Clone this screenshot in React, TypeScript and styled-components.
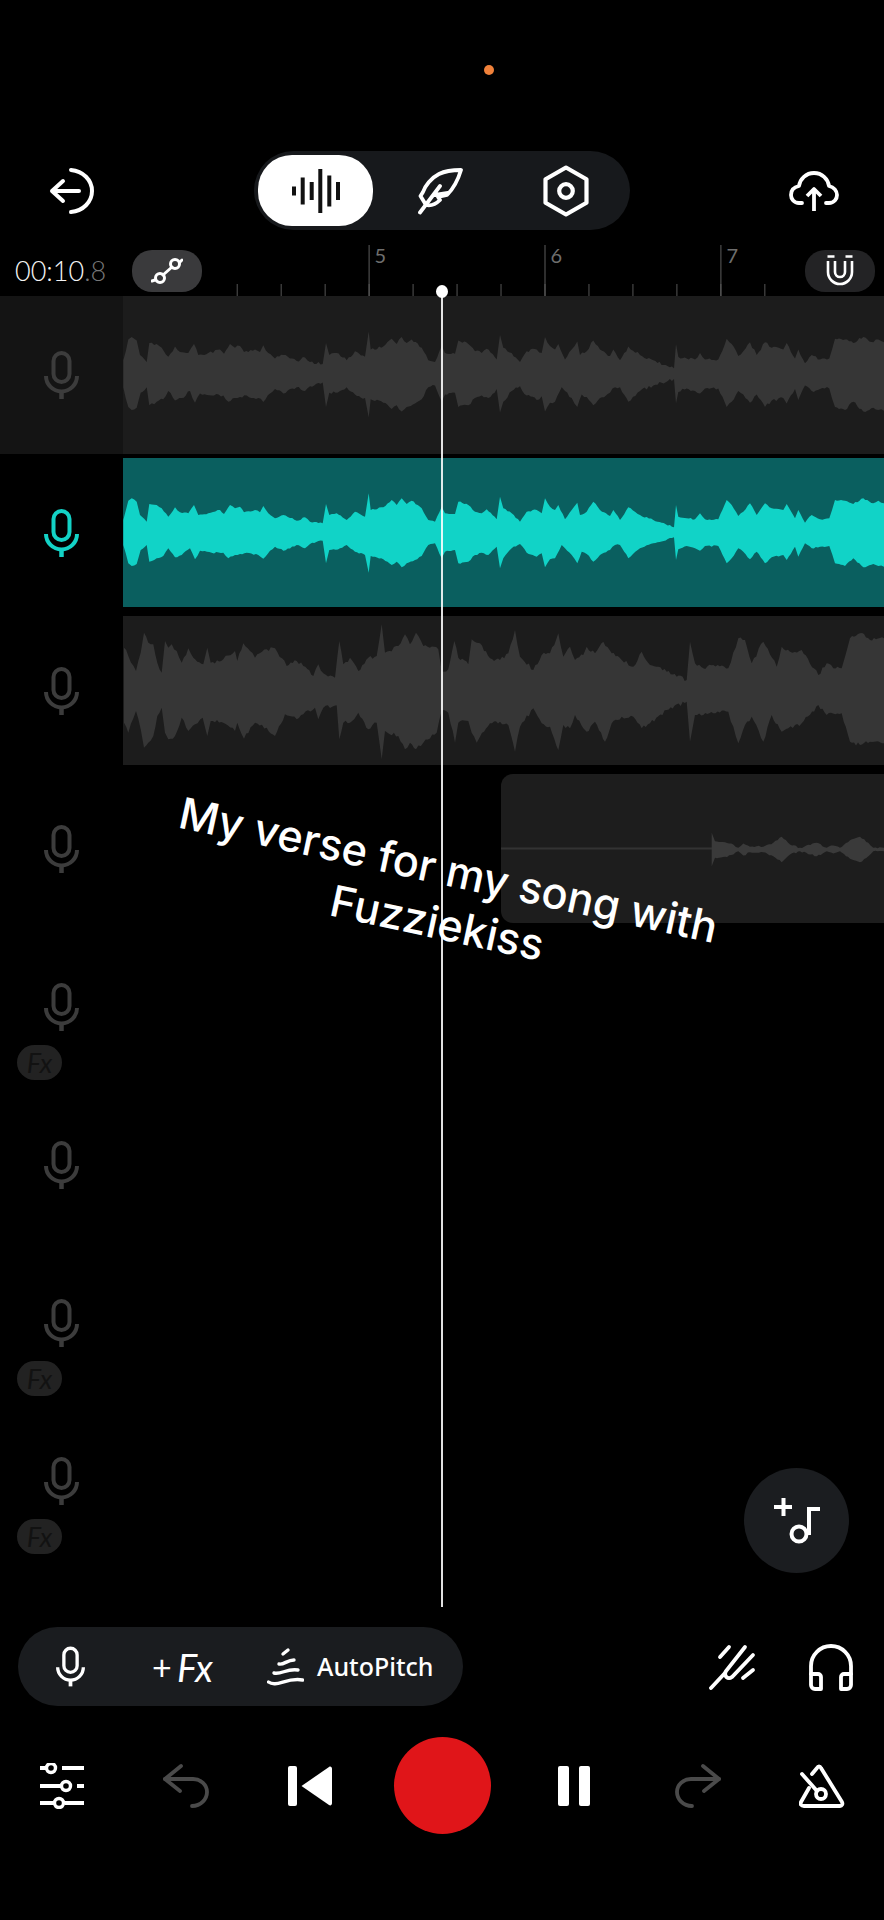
import React from 'react';
import styled, { createGlobalStyle } from 'styled-components';

type Point = [number, number];

const GlobalStyle = createGlobalStyle`
  html, body {
    margin: 0;
    padding: 0;
    background: #000;
  }
  * {
    box-sizing: border-box;
  }
`;

const Page = styled.div`
  position: relative;
  width: 884px;
  height: 1920px;
  overflow: hidden;
  background: #000;
  color: #fff;
  font-family: 'Lato', 'Liberation Sans', sans-serif;
  display: flex;
  flex-direction: column;
`;

const StatusArea = styled.div`
  height: 151px;
  padding: 65px 0 0 484px;
`;

const CameraDot = styled.div`
  width: 10px;
  height: 10px;
  border-radius: 50%;
  background: #f0813a;
`;

const TopBar = styled.div`
  height: 79px;
  padding: 0 45px 0 49px;
  display: grid;
  grid-template-columns: 205px 376px 1fr;
  align-items: center;
`;

const ModeSwitch = styled.div`
  height: 79px;
  padding: 4px;
  border-radius: 40px;
  background: #17191c;
  display: flex;
  align-items: center;
`;

const ModeButton = styled.div<{ $active?: boolean; $width: number }>`
  width: ${({ $width }) => $width}px;
  height: 71px;
  border-radius: 34px;
  display: flex;
  align-items: center;
  justify-content: center;
  background: ${({ $active }) => ($active ? '#fff' : 'transparent')};
`;

const TopIcon = styled.div<{ $end?: boolean }>`
  display: flex;
  justify-content: ${({ $end }) => ($end ? 'flex-end' : 'flex-start')};
`;

const Timeline = styled.div`
  position: relative;
  margin-top: 15px;
  height: 1382px;
`;

const RulerRow = styled.div`
  height: 51px;
  padding: 0 9px 0 15px;
  display: flex;
  align-items: center;
`;

const Timer = styled.div`
  width: 117px;
  font-size: 27px;
  font-weight: 300;
  color: #f4f4f4;
  span {
    color: #777;
  }
`;

const RulerButton = styled.div<{ $bg: string }>`
  width: 70px;
  height: 42px;
  flex: none;
  border-radius: 20px;
  background: ${({ $bg }) => $bg};
  display: flex;
  align-items: center;
  justify-content: center;
`;

const RulerScale = styled.svg`
  flex: 1;
  height: 55px;
  margin-top: -4px;
  align-self: flex-start;
  display: block;
`;

const Tracks = styled.div`
  display: flex;
  flex-direction: column;
`;

const TrackRow = styled.div<{ $tint?: boolean }>`
  position: relative;
  height: 158px;
  display: flex;
  background: ${({ $tint }) => ($tint ? '#141414' : 'transparent')};
`;

const MicCell = styled.div`
  width: 123px;
  flex: none;
  display: flex;
  align-items: center;
  justify-content: center;
`;

const Clip = styled.div<{ $bg: string; $full?: boolean; $inset?: number }>`
  flex: 1;
  margin: ${({ $full }) => ($full ? '0' : '4px 0 5px')};
  margin-left: ${({ $inset }) => $inset || 0}px;
  border-radius: ${({ $inset }) => ($inset ? '12px 0 0 12px' : '0')};
  background: ${({ $bg }) => $bg};
  overflow: hidden;
`;

const WaveSvg = styled.svg`
  width: 100%;
  height: 100%;
  display: block;
`;

const FxBadge = styled.div`
  position: absolute;
  left: 17px;
  top: 117px;
  width: 45px;
  height: 35px;
  border-radius: 18px;
  background: #222;
  color: #121212;
  font-size: 27px;
  font-style: italic;
  line-height: 35px;
  text-align: center;
`;

const Playhead = styled.div`
  position: absolute;
  left: 441px;
  top: 46px;
  bottom: 20px;
  width: 2px;
  background: rgba(255, 255, 255, 0.88);
  &::before {
    content: '';
    position: absolute;
    left: -5px;
    top: -6px;
    width: 12px;
    height: 13px;
    border-radius: 50%;
    background: #fff;
  }
`;

const AddTrackButton = styled.div`
  position: absolute;
  right: 35px;
  bottom: 54px;
  width: 105px;
  height: 105px;
  border-radius: 50%;
  background: #1b1d20;
  display: flex;
  align-items: center;
  justify-content: center;
`;

const Caption = styled.div`
  position: absolute;
  left: 443px;
  top: 896px;
  width: 640px;
  transform: translate(-50%, -50%) rotate(12.2deg);
  font-family: 'Inter', 'Liberation Sans', sans-serif;
  font-size: 43.4px;
  font-weight: 500;
  line-height: 54px;
  text-align: center;
  color: #fff;
`;

const ToolRow = styled.div`
  height: 79px;
  padding: 0 30px 0 18px;
  display: flex;
  align-items: center;
  justify-content: space-between;
`;

const ToolPill = styled.div`
  width: 445px;
  height: 79px;
  padding-left: 38px;
  border-radius: 40px;
  background: #1a1c1f;
  display: flex;
  align-items: center;
`;

const FxLabel = styled.div`
  margin: 0 54px 0 67px;
  width: 61px;
  display: flex;
  align-items: center;
  justify-content: space-between;
  font-size: 38px;
  font-style: italic;
  white-space: nowrap;
  line-height: 1;
  span {
    font-style: normal;
    font-size: 34px;
  }
`;

const PitchLabel = styled.div`
  margin-left: 13px;
  font-family: 'Noto Sans', 'Liberation Sans', sans-serif;
  font-size: 25px;
  font-weight: 500;
  white-space: nowrap;
  position: relative;
  top: -1px;
`;

const ToolGroup = styled.div`
  display: flex;
  align-items: center;
  gap: 52px;
`;

const Transport = styled.div`
  margin-top: 31px;
  height: 97px;
  display: grid;
  grid-template-columns: repeat(3, 124px) 140px repeat(3, 124px);
  align-items: center;
  justify-items: center;
`;

const RecordButton = styled.div`
  width: 97px;
  height: 97px;
  border-radius: 50%;
  background: #e01519;
`;

const PauseIcon = styled.div`
  display: flex;
  gap: 10px;
  i {
    display: block;
    width: 11px;
    height: 40px;
    border-radius: 2px;
    background: #fff;
  }
`;

// waveform outlines traced off the reference, in 3x crop coordinates
const fromCrop = (ox: number, oy: number, pts: Point[]): Point[] =>
  pts.map(([x, y]) => [ox + x / 3, oy + y / 3]);

const tealTop: Point[] = [
  ...fromCrop(120, 480, [[10,120],[25,62],[35,55],[50,65],[60,105],[80,125],[88,72],[110,75],[125,85],[145,110],[165,82],[180,97],[205,100],[222,75],[235,105],[265,100],[300,90],[312,102],[330,75],[345,85],[360,80],[372,97],[405,90],[420,97],[430,78],[445,100],[465,115],[490,105],[530,122],[555,112],[570,125],[608,130],[618,72],[628,105],[650,100],[680,120],[705,95],[735,110],[746,40],[752,90],[790,82],[815,60],[830,75],[845,55],[860,72],[875,62],[905,85],[925,120],[945,125],[965,80],[975,100],[1005,102],[1015,65],[1045,75],[1065,95],[1085,100],[1100,88],[1130,118]]),
  ...fromCrop(500, 480, [[0,50],[10,85],[35,100],[60,125],[80,95],[110,90],[125,100],[135,55],[150,80],[165,90],[175,75],[195,118],[215,90],[232,68],[240,105],[260,95],[280,65],[300,90],[330,108],[340,90],[360,120],[385,82],[420,105],[460,120],[522,142],[528,75],[535,110],[560,115],[585,118],[600,100],[615,118],[655,118],[680,60],[695,75],[715,108],[730,95],[750,70],[770,105],[795,70],[815,85],[850,90],[860,72],[885,115],[895,90],[915,128],[935,105],[960,118],[988,115],[1005,60],[1035,62],[1060,72],[1090,55],[1120,70],[1135,62],[1152,70]]),
];

const tealBottom: Point[] = [
  ...fromCrop(120, 480, [[10,195],[25,250],[35,258],[50,252],[62,210],[80,195],[88,245],[110,235],[130,228],[145,205],[165,232],[185,225],[210,205],[225,238],[240,212],[275,218],[310,218],[325,235],[345,225],[360,222],[380,218],[415,225],[430,236],[450,212],[465,200],[490,212],[530,195],[555,205],[570,192],[608,182],[618,250],[628,210],[660,205],[680,195],[705,215],[735,225],[746,278],[752,228],[790,238],[815,255],[830,245],[845,262],[860,250],[885,240],[905,228],[925,195],[945,190],[965,235],[975,215],[1005,210],[1015,250],[1045,245],[1065,225],[1085,218],[1105,225],[1130,200]]),
  ...fromCrop(500, 480, [[0,265],[10,235],[35,205],[60,192],[80,218],[110,230],[125,220],[135,262],[150,238],[165,235],[185,195],[195,205],[215,225],[232,250],[245,215],[260,222],[280,245],[300,225],[330,210],[345,195],[360,195],[385,235],[420,205],[460,190],[522,172],[528,240],[535,208],[560,198],[585,205],[600,212],[615,198],[655,198],[680,250],[695,235],[715,205],[730,215],[750,238],[770,215],[795,250],[815,232],[850,225],[860,240],[885,200],[895,230],[915,190],[935,205],[960,200],[988,198],[1005,250],[1035,258],[1060,235],[1090,262],[1120,252],[1135,258],[1152,260]]),
];

const grayTop: Point[] = [
  ...fromCrop(120, 616, [[12,95],[25,120],[48,165],[62,110],[72,50],[85,80],[100,85],[112,140],[125,170],[135,75],[145,95],[155,85],[170,105],[185,140],[205,97],[220,125],[250,145],[262,95],[272,140],[310,130],[345,105],[352,135],[370,82],[390,105],[405,125],[440,100],[465,97],[500,150],[530,135],[550,150],[580,180],[595,145],[610,172],[645,185],[658,75],[670,145],[690,125],[715,165],[745,125],[770,120],[785,25],[795,110],[835,90],[855,55],[870,85],[888,50],[910,90],[955,100],[965,165],[985,160],[1003,75],[1015,125],[1045,145],[1055,70],[1070,80]]),
  ...fromCrop(480, 600, [[0,130],[30,175],[60,180],[85,160],[105,90],[120,170],[160,210],[185,165],[210,160],[235,100],[250,170],[270,140],[285,180],[310,165],[320,140],[345,160],[370,125],[395,160],[425,180],[460,200],[485,155],[510,195],[560,215],[620,240],[630,125],[645,190],[670,205],[700,195],[745,205],[775,115],[795,120],[815,190],[850,125],[890,200],[905,140],[930,155],[965,150],[1015,225],[1040,190],[1060,205],[1085,205],[1110,115],[1140,100],[1170,120],[1212,115]]),
];

const grayBottom: Point[] = [
  ...fromCrop(120, 616, [[12,320],[25,350],[48,285],[62,340],[72,395],[85,380],[100,360],[112,300],[125,275],[135,350],[145,370],[165,360],[185,305],[205,345],[225,325],[248,305],[262,360],[272,315],[310,320],[345,345],[352,320],[372,368],[405,320],[440,335],[465,360],[495,295],[530,310],[550,295],[585,275],[595,310],[610,275],[650,268],[658,370],[670,320],[690,320],[715,290],[745,340],[770,320],[785,430],[795,345],[835,360],[855,400],[870,380],[888,400],[910,380],[950,350],[965,285],[985,290],[1005,380],[1015,320],[1045,315],[1055,350],[1070,380]]),
  ...fromCrop(480, 600, [[0,410],[30,370],[60,365],[85,375],[105,455],[120,380],[160,325],[185,370],[210,380],[235,450],[250,375],[270,385],[285,345],[310,385],[320,395],[345,365],[375,425],[395,370],[425,350],[460,350],[485,385],[510,370],[560,330],[620,305],[630,425],[645,345],[670,345],[700,340],[745,335],[775,430],[795,375],[815,350],[850,425],[875,345],[905,395],[925,385],[965,370],[1015,315],[1040,345],[1085,340],[1110,425],[1140,435],[1170,425],[1212,430]]),
];

const lastTop: Point[] = fromCrop(480, 600, [[695,700],[705,725],[735,728],[760,735],[775,745],[790,732],[810,742],[830,740],[850,742],[880,730],[905,712],[930,735],[960,745],[1010,730],[1040,745],[1060,738],[1080,745],[1110,722],[1140,712],[1165,730],[1180,745],[1212,745]]);
const lastBottom: Point[] = lastTop.map(([x, y]) => [x, 849 * 2 - y + 2]);

// the traced outline is coarse, this adds the fine serration of real audio
const roughen = (pts: Point[], amount: number, seed: number): Point[] => {
  const out: Point[] = [];
  pts.forEach(([x, y], i) => {
    out.push([x, y]);
    const next = pts[i + 1];
    if (!next) return;
    const steps = Math.floor((next[0] - x) / 2);
    for (let s = 1; s < steps; s++) {
      const t = s / steps;
      const px = x + (next[0] - x) * t;
      const raw = Math.sin((px + seed) * 12.9898) * 43758.5453;
      const noise = raw - Math.floor(raw) - 0.5;
      out.push([px, y + (next[1] - y) * t + noise * amount]);
    }
  });
  return out;
};

const toPath = (top: Point[], bottom: Point[]) =>
  'M' + [...top, ...[...bottom].reverse()].map(([x, y]) => `${x.toFixed(1)} ${y.toFixed(1)}`).join('L') + 'Z';

const rescale = (pts: Point[], from: number, to: number, k: number): Point[] =>
  pts.map(([x, y]) => [x, to + (y - from) * k]);

const tracks = [
  { mic: '#3c3c3c', tint: true, fx: false },
  { mic: '#13d2c6', tint: false, fx: false },
  { mic: '#3c3c3c', tint: false, fx: false },
  { mic: '#3c3c3c', tint: false, fx: false },
  { mic: '#3c3c3c', tint: false, fx: true },
  { mic: '#3c3c3c', tint: false, fx: false },
  { mic: '#3c3c3c', tint: false, fx: true },
  { mic: '#3c3c3c', tint: false, fx: true },
];

const Wave: React.FC<{ x: number; y: number; w: number; h: number; d: string; fill: string; children?: React.ReactNode }> = ({ x, y, w, h, d, fill, children }) => (
  <WaveSvg viewBox={`${x} ${y} ${w} ${h}`} preserveAspectRatio="none">
    {children}
    <path d={d} fill={fill} />
  </WaveSvg>
);

const clipFor = (index: number) => {
  if (index === 0) {
    return (
      <Clip $bg="#1c1c1c" $full>
        <Wave x={123} y={296} w={761} h={158} fill="#363636"
          d={toPath(
            roughen(rescale(tealTop, 532.7, 374, 1.08), 3, 3),
            roughen(rescale(tealBottom, 532.7, 374, 1.08), 3, 7),
          )} />
      </Clip>
    );
  }
  if (index === 1) {
    return (
      <Clip $bg="#0a5f5f">
        <Wave x={123} y={458} w={761} h={149} fill="#11d3c7" d={toPath(roughen(tealTop, 1.5, 1), roughen(tealBottom, 1.5, 2))} />
      </Clip>
    );
  }
  if (index === 2) {
    return (
      <Clip $bg="#1c1c1c">
        <Wave x={123} y={616} w={761} h={149} fill="#363636" d={toPath(roughen(grayTop, 4, 5), roughen(grayBottom, 4, 9))} />
      </Clip>
    );
  }
  if (index === 3) {
    return (
      <Clip $bg="#1d1d1d" $inset={378}>
        <Wave x={501} y={775} w={383} h={148} fill="#3a3a3a" d={toPath(roughen(lastTop, 1.5, 4), roughen(lastBottom, 1.5, 6))}>
          <rect x={501} y={848} width={215} height={2} fill="#333" />
        </Wave>
      </Clip>
    );
  }
  return null;
};

const MicIcon: React.FC<{ color: string; w?: number; h?: number }> = ({ color, w = 35, h = 48 }) => (
  <svg width={w} height={h} viewBox="0 0 35 48" fill="none" stroke={color} strokeWidth="4">
    <rect x="9.500" y="2" width="16" height="29" rx="8" />
    <path d="M2 25a15.500 15.500 0 0 0 31 0" />
    <path d="M17.500 40v8" strokeWidth="4.500" />
  </svg>
);

const BackIcon = () => (
  <svg width="46" height="48" viewBox="0 0 46 48" fill="none" stroke="#fff" strokeWidth="4" strokeLinecap="round" strokeLinejoin="round">
    <path d="M30 24H3M14 14 3 24l11 10" />
    <path d="M22 3c12 1 21 10 21 21s-9 20-21 21" />
  </svg>
);

const WaveBarsIcon = () => (
  <svg width="48" height="44" viewBox="0 0 48 44" fill="#111">
    <rect x="0" y="17.500" width="4" height="9" />
    <rect x="8.700" y="8.500" width="4" height="27" />
    <rect x="17.700" y="13" width="4" height="18" />
    <rect x="26.300" y="0" width="4" height="44" />
    <rect x="35.300" y="6.500" width="4" height="31" />
    <rect x="44" y="13" width="4" height="18" />
  </svg>
);

const FeatherIcon = () => (
  <svg width="45" height="48" viewBox="0 0 45 48" fill="none" stroke="#fff" strokeWidth="3.800" strokeLinecap="round" strokeLinejoin="round">
    <path d="M43 3C34 3 27 4 21 7 13 11 7 19 5 25L2.500 29 8 38C13 39 18 37 22 33L20 30 29 28C34 23 40 13 43 3Z" />
    <path d="M2 45.500 22 19M17 28l13-2" />
  </svg>
);

const HexIcon = () => (
  <svg width="46" height="52" viewBox="0 0 46 52" fill="none" stroke="#fff" strokeWidth="4.200" strokeLinejoin="round">
    <path d="M23 2.500 43.500 14.300V37.700L23 49.500 2.500 37.700V14.300Z" />
    <circle cx="23" cy="26" r="6.800" />
  </svg>
);

const CloudIcon = () => (
  <svg width="50" height="40" viewBox="0 0 50 40" fill="none" stroke="#fff" strokeWidth="3.800" strokeLinejoin="round">
    <path d="M13 32H10C5 32 2 28 2 24 2 19 5 16 10 15 11 8 17 2 25 2 33 2 39 8 40 15 45 16 48 20 48 24 48 28 45 32 40 32H37" strokeLinecap="round" />
    <path d="M25 40V18M18 25l7-7 7 7" />
  </svg>
);

const NodesIcon = () => (
  <svg width="32" height="26" viewBox="0 0 32 26" fill="none" stroke="#fff" strokeWidth="3" strokeLinecap="round">
    <circle cx="9" cy="20" r="4.500" />
    <circle cx="24" cy="6" r="4.500" />
    <path d="M12 17 21 9M1 23l3-1M28.500 4.500 31 2" />
  </svg>
);

const MagnetIcon = () => (
  <svg width="28" height="32" viewBox="0 0 28 32" fill="none" stroke="#fff" strokeWidth="2.600">
    <path d="M1.500 1.500h7M19.500 1.500h7" />
    <path d="M2 6v11a12 12 0 0 0 24 0V6" />
    <path d="M9 6v11a5 5 0 0 0 10 0V6" />
  </svg>
);

const PitchIcon = () => (
  <svg width="37" height="40" viewBox="0 0 37 40" fill="none" stroke="#fff" strokeWidth="3.400" strokeLinecap="round">
    <path d="M16 7l5-4" />
    <path d="M12 17c5 1 8-4 15-4" />
    <path d="M7 26c7 2 13-5 24-3" />
    <path d="M1.500 35c8 6 18-5 34-2" />
  </svg>
);

const ForkIcon = () => (
  <svg width="47" height="48" viewBox="0 0 47 48" fill="none" stroke="#fff" strokeWidth="3.800" strokeLinecap="round">
    <path d="M2 45 16 30" />
    <path d="M36 4 17 28c-3 5 2 9 6 6L44 12" />
    <path d="M11 14 20 4M34 35l10-8" />
  </svg>
);

const HeadphonesIcon = () => (
  <svg width="46" height="48" viewBox="0 0 46 48" fill="none" stroke="#fff" strokeWidth="3.800" strokeLinejoin="round">
    <path d="M3 32V23a20 20 0 0 1 40 0v9" />
    <path d="M3 31h7a3 3 0 0 1 3 3v12H7a4 4 0 0 1-4-4Z" />
    <path d="M43 31h-7a3 3 0 0 0-3 3v12h6a4 4 0 0 0 4-4Z" />
  </svg>
);

const SlidersIcon = () => (
  <svg width="44" height="46" viewBox="0 0 44 46" fill="none" stroke="#fff" strokeWidth="4">
    <path d="M0 5h6M22 5h22" />
    <circle cx="11" cy="5" r="4.500" strokeWidth="3.400" />
    <path d="M0 23h21M37 23h7" />
    <circle cx="26" cy="23" r="4.500" strokeWidth="3.400" />
    <path d="M0 40h14M25 40h19" />
    <circle cx="19" cy="40" r="4.500" strokeWidth="3.400" />
  </svg>
);

const UndoSvg = styled.svg<{ $flip?: boolean }>`
  transform: ${({ $flip }) => ($flip ? 'scaleX(-1)' : 'none')};
`;

const UndoIcon: React.FC<{ flip?: boolean }> = ({ flip }) => (
  <UndoSvg $flip={flip} width="46" height="46" viewBox="0 0 46 46" fill="none" stroke="#4a4a4a" strokeWidth="3.800" strokeLinecap="round" strokeLinejoin="round">
    <path d="M18 3 2 16l15 12" />
    <path d="M2 16h28c8 0 14 6 14 13s-6 14-15 14" />
  </UndoSvg>
);

const PrevIcon = () => (
  <svg width="44" height="40" viewBox="0 0 44 40" fill="#fff">
    <rect x="0" y="0" width="9" height="40" rx="2" />
    <path d="M13.500 20 41 1c1.500-1 3 0 3 2v34c0 2-1.500 3-3 2Z" />
  </svg>
);

const MetronomeIcon = () => (
  <svg width="46" height="44" viewBox="0 0 46 44" fill="none" stroke="#fff" strokeWidth="3.800" strokeLinecap="round" strokeLinejoin="round">
    <path d="M13 10 18 4c1-2 3-2 4 0l21 34c1 2 0 4-2 4H5c-3 0-4-2-3-4l8-14" />
    <path d="M3 10 18 27" />
    <circle cx="22" cy="30" r="5" />
  </svg>
);

const AddTrackIcon = () => (
  <svg width="46" height="46" viewBox="0 0 46 46" fill="none" stroke="#fff" strokeWidth="4">
    <path d="M9.500 0v18M0 9h18" />
    <path d="M35 11v26" />
    <path d="M33 11h13" />
    <circle cx="25" cy="36" r="7.500" />
  </svg>
);

const minorTicks = Array.from({ length: 13 }, (_, i) => 34.7 + i * 43.97);
const majorTicks = [
  { x: 166.6, label: '5' },
  { x: 342.5, label: '6' },
  { x: 518.4, label: '7' },
];

export default function App() {
  return (
    <Page>
      <GlobalStyle />
      <StatusArea>
        <CameraDot />
      </StatusArea>
      <TopBar>
        <TopIcon>
          <BackIcon />
        </TopIcon>
        <ModeSwitch>
          <ModeButton $active $width={116}>
            <WaveBarsIcon />
          </ModeButton>
          <ModeButton $width={134}>
            <FeatherIcon />
          </ModeButton>
          <ModeButton $width={120}>
            <HexIcon />
          </ModeButton>
        </ModeSwitch>
        <TopIcon $end>
          <CloudIcon />
        </TopIcon>
      </TopBar>

      <Timeline>
        <RulerRow>
          <Timer>
            00:10<span>.8</span>
          </Timer>
          <RulerButton $bg="#3a3a3c">
            <NodesIcon />
          </RulerButton>
          <RulerScale viewBox="0 -4 603 55">
            {minorTicks.map((x) => (
              <rect key={x} x={x} y={39} width={1} height={12} fill="#555" />
            ))}
            {majorTicks.map((t) => (
              <g key={t.label}>
                <rect x={t.x} y={0} width={1} height={51} fill="#5c5c5c" />
                <text x={t.x + 6} y={18} fontSize={20} fill="#6e6e6e" fontFamily="Lato, sans-serif">
                  {t.label}
                </text>
              </g>
            ))}
          </RulerScale>
          <RulerButton $bg="#232325">
            <MagnetIcon />
          </RulerButton>
        </RulerRow>

        <Tracks>
          {tracks.map((track, i) => (
            <TrackRow key={i} $tint={track.tint}>
              <MicCell>
                <MicIcon color={track.mic} />
              </MicCell>
              {clipFor(i)}
              {track.fx && <FxBadge>Fx</FxBadge>}
            </TrackRow>
          ))}
        </Tracks>

        <Playhead />
        <AddTrackButton>
          <AddTrackIcon />
        </AddTrackButton>
      </Timeline>

      <ToolRow>
        <ToolPill>
          <MicIcon color="#fff" w={29} h={41} />
          <FxLabel>
            <span>+</span>Fx
          </FxLabel>
          <PitchIcon />
          <PitchLabel>AutoPitch</PitchLabel>
        </ToolPill>
        <ToolGroup>
          <ForkIcon />
          <HeadphonesIcon />
        </ToolGroup>
      </ToolRow>

      <Transport>
        <SlidersIcon />
        <UndoIcon />
        <PrevIcon />
        <RecordButton />
        <PauseIcon>
          <i />
          <i />
        </PauseIcon>
        <UndoIcon flip />
        <MetronomeIcon />
      </Transport>

      <Caption>
        My verse for my song with
        <br />
        Fuzziekiss
      </Caption>
    </Page>
  );
}
